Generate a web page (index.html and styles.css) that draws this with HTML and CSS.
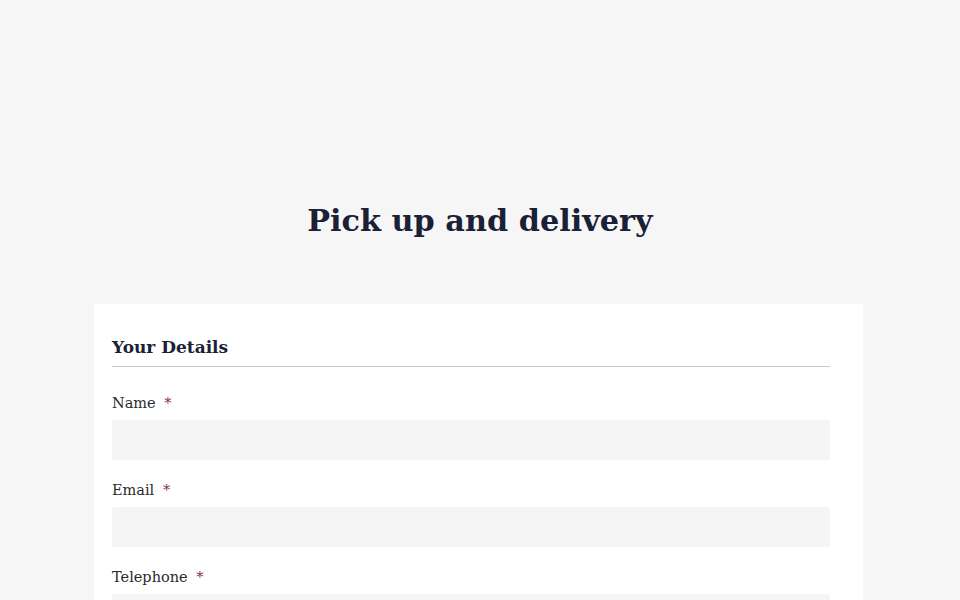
FILE: index.html
```html
<!DOCTYPE html>
<html lang="en">
<head>
<meta charset="utf-8">
<title>Pick up and delivery</title>
<link rel="stylesheet" href="styles.css">
</head>
<body>
<main class="page">
  <h1 class="title">Pick up and delivery</h1>
  <section class="card">
    <h2 class="section-title">Your Details</h2>
    <form class="form">
      <div class="field">
        <label class="label" for="name">Name <span class="req">*</span></label>
        <input class="input" id="name" type="text">
      </div>
      <div class="field">
        <label class="label" for="email">Email <span class="req">*</span></label>
        <input class="input" id="email" type="email">
      </div>
      <div class="field">
        <label class="label" for="tel">Telephone <span class="req">*</span></label>
        <input class="input" id="tel" type="tel">
      </div>
    </form>
  </section>
</main>
</body>
</html>
```

FILE: styles.css
```css
* { box-sizing: border-box; }
html, body { margin: 0; padding: 0; }
body {
  background: #f6f6f6;
  font-family: "DejaVu Serif", "Liberation Serif", serif;
  color: #222;
  overflow: hidden;
}
.page {
  padding-top: 199px;
}
.title {
  margin: 0;
  text-align: center;
  font-size: 30.3px;
  line-height: 44px;
  font-weight: bold;
  color: #1a2136;
  letter-spacing: 0;
}
.card {
  width: 769px;
  margin: 61px 0 0 94px;
  background: #fff;
  padding: 30px 33px 40px 18px;
  min-height: 300px;
}
.section-title {
  margin: 0;
  font-size: 17px;
  line-height: 26px;
  font-weight: bold;
  color: #1a2136;
  padding-bottom: 6px;
  border-bottom: 1px solid #c9c9c9;
}
.form {
  padding-top: 26px;
  display: flex;
  flex-direction: column;
  gap: 20px;
}
.field {
  display: flex;
  flex-direction: column;
  gap: 7px;
}
.label {
  font-size: 14.5px;
  line-height: 20px;
  color: #2a2a2a;
}
.req {
  color: #8a2a4a;
  margin-left: 4px;
}
.input {
  display: block;
  width: 100%;
  height: 40px;
  border: 0;
  background: #f5f5f5;
  border-radius: 2px;
  font: inherit;
}
```
